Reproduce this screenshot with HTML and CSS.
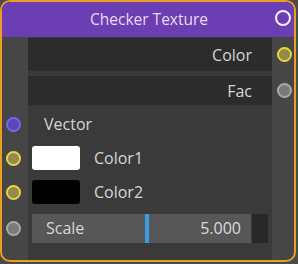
FILE: index.html
```html
<!DOCTYPE html>
<html>
<head>
<meta charset="utf-8">
<link rel="stylesheet" href="styles.css">
</head>
<body>
<div class="node">
  <div class="header">
    <span class="title">Checker Texture</span>
    <span class="hdr-socket"></span>
  </div>
  <div class="body">
    <div class="row out out-color">
      <div class="cell"><span class="label">Color</span></div>
      <span class="socket right yellow"></span>
    </div>
    <div class="row out out-fac">
      <div class="cell"><span class="label">Fac</span></div>
      <span class="socket right grey"></span>
    </div>
    <div class="row in in-vector">
      <span class="socket left purple"></span>
      <div class="cell"><span class="label">Vector</span></div>
    </div>
    <div class="row in in-color">
      <span class="socket left yellow"></span>
      <div class="cell"><span class="swatch white"></span><span class="label">Color1</span></div>
    </div>
    <div class="row in in-color">
      <span class="socket left yellow"></span>
      <div class="cell"><span class="swatch black"></span><span class="label">Color2</span></div>
    </div>
    <div class="row in in-scale">
      <span class="socket left grey"></span>
      <div class="cell">
        <div class="slider">
          <span class="label">Scale</span>
          <span class="cursor"></span>
          <span class="value">5.000</span>
        </div>
        <span class="spin"></span>
      </div>
    </div>
  </div>
</div>
</body>
</html>
```

FILE: styles.css
```css
html, body {
  margin: 0;
  padding: 0;
  background: #4a4a4a;
}
body {
  width: 298px;
  height: 264px;
  overflow: hidden;
  font-family: "Open Sans", "Noto Sans", sans-serif;
}
.node {
  box-sizing: border-box;
  width: 296px;
  height: 262px;
  border: 2px solid #e8a01e;
  border-radius: 10px;
  overflow: hidden;
  display: flex;
  flex-direction: column;
  background: linear-gradient(to right, #464646 0, #464646 26px, #3a3a3a 26px, #3a3a3a 270px, #464646 270px);
}
.header {
  height: 35px;
  flex: none;
  background: #6b3eb3;
  display: flex;
  align-items: center;
  justify-content: center;
  position: relative;
}
.title {
  color: #ead9f2;
  font-size: 15.5px;
  margin-left: 2px;
  margin-top: -1px;
}
.hdr-socket {
  position: absolute;
  right: 3px;
  top: 8px;
  width: 16px;
  height: 16px;
  box-sizing: border-box;
  border: 2.5px solid #f4eef8;
  border-radius: 50%;
}
.body {
  display: flex;
  flex-direction: column;
  padding-top: 1px;
}
.row {
  display: flex;
  align-items: center;
  position: relative;
  height: 34px;
}
.cell {
  margin-left: 26px;
  width: 244px;
  height: 100%;
  display: flex;
  align-items: center;
  color: #d6d6d6;
  font-size: 16px;
}
.out .cell {
  background: #2c2c2c;
  justify-content: flex-end;
}
.out .label {
  margin-right: 20px;
}
.out-color { height: 33px; }
.out-fac { height: 29px; margin-top: 5px; }
.in-vector { height: 34px; margin-top: 2px; }
.in-vector .label { margin-left: 16px; }
.in-color .cell { padding-left: 4px; box-sizing: border-box; }
.in-color .label { margin-left: 14px; }
.swatch {
  width: 48px;
  height: 24px;
  border-radius: 3px;
}
.swatch.white { background: #ffffff; }
.swatch.black { background: #000000; }
.in-scale { height: 36px; margin-top: 1px; }
.in-scale .cell { padding-left: 4px; box-sizing: border-box; }
.slider {
  width: 219px;
  height: 29px;
  background: #575757;
  display: flex;
  align-items: center;
  position: relative;
  box-sizing: border-box;
  padding: 0 10px 0 14px;
  justify-content: space-between;
}
.cursor {
  position: absolute;
  left: 113px;
  top: 0;
  width: 4px;
  height: 29px;
  background: #3a9ce2;
}
.value { color: #dadada; }
.spin {
  width: 16px;
  height: 29px;
  background: #282828;
  margin-left: 1px;
}
.socket {
  position: absolute;
  width: 15px;
  height: 15px;
  box-sizing: border-box;
  border-radius: 50%;
  border: 2px solid;
}
.socket.left { left: 4px; }
.socket.right { right: 2px; }
.yellow { background: #968a4a; border-color: #e4d646; }
.grey { background: #7a7a7a; border-color: #a8a8a8; }
.purple { background: #5a48b8; border-color: #7a64ee; }
```
